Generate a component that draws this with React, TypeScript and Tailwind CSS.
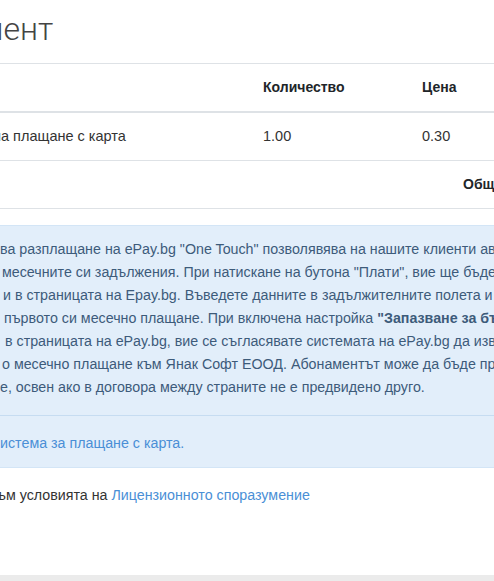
import React from 'react';

const lines: { pad: string; text: React.ReactNode }[] = [
  { pad: 'pl-0', text: 'ва разплащане на ePay.bg "One Touch" позволявява на нашите клиенти автоматично' },
  { pad: 'pl-[2px]', text: 'месечните си задължения. При натискане на бутона "Плати", вие ще бъдете пренасочени' },
  { pad: 'pl-[3px]', text: 'и в страницата на Epay.bg. Въведете данните в задължителните полета и натиснете' },
  {
    pad: 'pl-[4px]',
    text: (
      <>
        {' '}първото си месечно плащане. При включена настройка{' '}
        <span className="font-bold">"Запазване за бъдещи плащания"</span>
      </>
    ),
  },
  { pad: 'pl-[5px]', text: ' в страницата на ePay.bg, вие се съгласявате системата на ePay.bg да извършва' },
  { pad: 'pl-[2px]', text: 'о месечно плащане към Янак Софт ЕООД. Абонаментът може да бъде прекратен' },
  { pad: 'pl-0', text: 'е, освен ако в договора между страните не е предвидено друго.' },
];

export default function App() {
  return (
    <div className="w-[494px] h-[581px] bg-white overflow-hidden flex flex-col font-['Liberation_Sans',Arial,sans-serif] text-[#333]">
      {/* заглавие */}
      <div className="h-[63px] overflow-hidden whitespace-nowrap pt-[10px]">
        <div className="-ml-[20px] font-['Roboto',sans-serif] font-light text-[32px] leading-[38px] text-[#444]">
          мент
        </div>
      </div>

      {/* таблица */}
      <div className="border-t border-[#dee2e6] border-b-2 h-[50px] flex items-center text-[14px] font-bold text-[#212529] whitespace-nowrap">
        <div className="w-[263px] shrink-0" />
        <div className="w-[159px] shrink-0">Количество</div>
        <div className="flex-1">Цена</div>
      </div>
      <div className="border-b border-[#dee2e6] h-[48px] flex items-center text-[14.5px] whitespace-nowrap">
        <div className="w-[263px] shrink-0 overflow-hidden">
          <div className="-ml-[7px]">на плащане с карта</div>
        </div>
        <div className="w-[159px] shrink-0">1.00</div>
        <div className="flex-1">0.30</div>
      </div>
      <div className="border-b border-[#dee2e6] h-[48px] flex items-center text-[14px] font-bold text-[#212529] whitespace-nowrap overflow-hidden">
        <div className="w-[463px] shrink-0" />
        <div className="shrink-0">Общо</div>
      </div>

      {/* инфо блок */}
      <div className="mt-[16px] bg-[#e2eefa] border-y border-[#d3e5f6] text-[14.25px] leading-[23px] text-[#3d5b7a]">
        <div className="pt-[12px] pb-[16px] overflow-hidden whitespace-nowrap">
          {lines.map((l, i) => (
            <div key={i} className={l.pad}>
              {l.text}
            </div>
          ))}
        </div>
        <div className="border-t border-[#c6dcf1] h-[52px] pt-[4px] flex items-center whitespace-nowrap text-[#4a8fd6]">
          истема за плащане с карта.
        </div>
      </div>

      {/* условия */}
      <div className="pt-[16px] text-[14.25px] leading-[23px] whitespace-nowrap overflow-hidden">
        <div className="-ml-[3px]">
          ъм условията на <span className="text-[#4a8fd6]">Лицензионното споразумение</span>
        </div>
      </div>

      <div className="flex-1" />
      <div className="h-[6px] bg-[#ebebeb]" />
    </div>
  );
}
